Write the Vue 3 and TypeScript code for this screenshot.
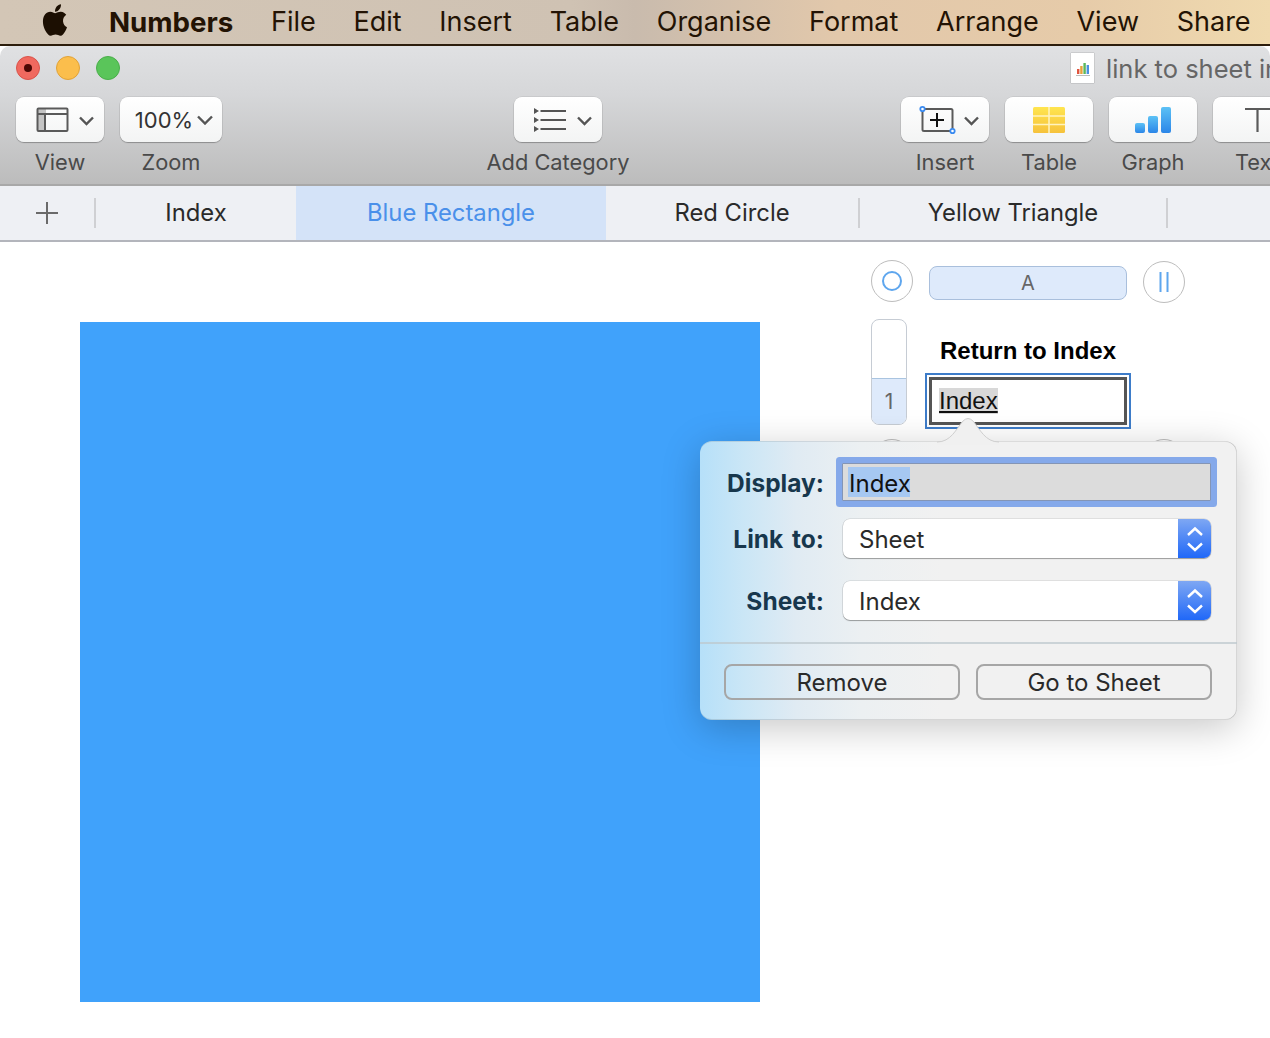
<script setup lang="ts">
const menus: string[] = ['File', 'Edit', 'Insert', 'Table', 'Organise', 'Format', 'Arrange', 'View', 'Share']
</script>

<template>
  <div class="screen">
    <header class="menubar">
      <svg class="apple" width="38" height="42" viewBox="0 0 24 24" preserveAspectRatio="none">
        <path fill="#1c0f02" d="M17.05 20.28c-.98.95-2.05.8-3.08.35-1.09-.46-2.09-.48-3.24 0-1.44.62-2.2.44-3.06-.35C2.79 15.25 3.51 7.59 9.05 7.31c1.35.07 2.29.74 3.08.8 1.18-.24 2.31-.93 3.57-.84 1.51.12 2.65.72 3.4 1.8-3.12 1.87-2.38 5.98.48 7.13-.57 1.5-1.31 2.99-2.54 4.09zM12.03 7.25c-.15-2.23 1.66-4.07 3.74-4.25.29 2.58-2.34 4.5-3.74 4.25z" />
      </svg>
      <span class="app-name">Numbers</span>
      <span v-for="m in menus" :key="m" class="menu-item">{{ m }}</span>
    </header>

    <div class="window">
      <section class="chrome">
        <div class="titlebar">
          <span class="light red"><i></i></span>
          <span class="light yellow"></span>
          <span class="light green"></span>
          <span class="doc">
            <svg width="16" height="16" viewBox="0 0 16 16">
              <rect x="2" y="9" width="2.4" height="5" fill="#e0563f" />
              <rect x="5.2" y="6" width="2.4" height="8" fill="#e8a13a" />
              <rect x="8.4" y="3" width="2.4" height="11" fill="#5cb85c" />
              <rect x="11.6" y="5" width="2.4" height="9" fill="#4a90e2" />
              <rect x="1" y="15" width="14" height="1" fill="#bbb" />
            </svg>
          </span>
          <span class="doc-title">link to sheet in Numbers</span>
        </div>

        <div class="toolbar">
          <div class="tool w88">
            <div class="tbtn">
              <svg width="88" height="45" viewBox="0 0 88 45">
                <rect x="22" y="12" width="8" height="22" fill="#c4c4c4" />
                <rect x="21.500" y="11.500" width="30" height="22.500" rx="1" fill="none" stroke="#5a5a5a" stroke-width="2" />
                <path d="M21.500 17H51.500M29 17V34" fill="none" stroke="#5a5a5a" stroke-width="2" />
                <path d="M64 20.500l6.500 6.500 6.500-6.500" fill="none" stroke="#555" stroke-width="2.400" />
              </svg>
            </div>
            <span class="tlabel">View</span>
          </div>
          <div class="tool w102">
            <div class="tbtn zoombtn">
              <span class="zoomval">100%</span>
              <svg width="16" height="10" viewBox="0 0 16 10">
                <path d="M1 1.500l7 7 7-7" fill="none" stroke="#555" stroke-width="2.400" />
              </svg>
            </div>
            <span class="tlabel">Zoom</span>
          </div>
          <div class="tool w88 add-cat">
            <div class="tbtn">
              <svg width="88" height="45" viewBox="0 0 88 45">
                <path d="M20 11l5 3-5 3zM20 20l5 3-5 3zM20 29l5 3-5 3z" fill="#555" />
                <path d="M26.500 14H52M26.500 23H52M26.500 32H52" stroke="#555" stroke-width="2" />
                <path d="M64 20.500l6.500 6.500 6.500-6.500" fill="none" stroke="#555" stroke-width="2.400" />
              </svg>
            </div>
            <span class="tlabel">Add Category</span>
          </div>
          <div class="tool w88 insert">
            <div class="tbtn">
              <svg width="88" height="45" viewBox="0 0 88 45">
                <rect x="21.500" y="12" width="30" height="22" rx="1.500" fill="none" stroke="#5a5a5a" stroke-width="2" />
                <path d="M36 16V30M29 23H43" stroke="#111" stroke-width="2" />
                <circle cx="21.500" cy="12" r="2.200" fill="#fff" stroke="#3b8bf0" stroke-width="1.800" />
                <circle cx="51.500" cy="34" r="2.200" fill="#fff" stroke="#3b8bf0" stroke-width="1.800" />
                <path d="M64 20.500l6.500 6.500 6.500-6.500" fill="none" stroke="#555" stroke-width="2.400" />
              </svg>
            </div>
            <span class="tlabel">Insert</span>
          </div>
          <div class="tool w88">
            <div class="tbtn">
              <svg width="32" height="26" viewBox="0 0 32 26">
                <defs>
                  <linearGradient id="tblg" x1="0" y1="0" x2="0" y2="1">
                    <stop offset="0" stop-color="#ffe54f" />
                    <stop offset="1" stop-color="#f6c23c" />
                  </linearGradient>
                </defs>
                <rect width="32" height="26" rx="1.500" fill="url(#tblg)" />
                <path d="M0 9H32M0 17.500H32M16 0V26" stroke="#fff3c0" stroke-width="1.500" />
              </svg>
            </div>
            <span class="tlabel">Table</span>
          </div>
          <div class="tool w88">
            <div class="tbtn">
              <svg width="36" height="26" viewBox="0 0 36 26">
                <defs>
                  <linearGradient id="grlg" x1="0" y1="0" x2="0" y2="1">
                    <stop offset="0" stop-color="#5cc1f5" />
                    <stop offset="1" stop-color="#2b86e8" />
                  </linearGradient>
                </defs>
                <rect x="0" y="16" width="10" height="10" rx="2" fill="url(#grlg)" />
                <rect x="13" y="9" width="10" height="17" rx="2" fill="url(#grlg)" />
                <rect x="26" y="0" width="10" height="26" rx="2" fill="url(#grlg)" />
              </svg>
            </div>
            <span class="tlabel">Graph</span>
          </div>
          <div class="tool w88">
            <div class="tbtn">
              <svg width="88" height="45" viewBox="0 0 88 45">
                <path d="M32 12H58M44.500 12V35" fill="none" stroke="#5a5a5a" stroke-width="2.200" />
              </svg>
            </div>
            <span class="tlabel">Text</span>
          </div>
        </div>
      </section>

      <nav class="tabs">
        <div class="tab-add">
          <svg width="24" height="24" viewBox="0 0 24 24">
            <path d="M12 1V23M1 12H23" stroke="#6a6a6a" stroke-width="2" />
          </svg>
        </div>
        <span class="sep"></span>
        <div class="tab w-index">Index</div>
        <div class="tab w-blue active">Blue Rectangle</div>
        <div class="tab w-red">Red Circle</div>
        <span class="sep"></span>
        <div class="tab w-yellow">Yellow Triangle</div>
        <span class="sep"></span>
      </nav>

      <main class="canvas">
        <div class="blue-rect"></div>

        <div class="sheet-table">
          <div class="col-row">
            <span class="round-btn top">
              <svg width="22" height="22" viewBox="0 0 22 22">
                <circle cx="11" cy="11" r="9" fill="none" stroke="#5ea6ee" stroke-width="2" />
              </svg>
            </span>
            <span class="col-head">A</span>
            <span class="round-btn end">
              <svg width="22" height="22" viewBox="0 0 22 22">
                <path d="M7.500 1V21M14.500 1V21" stroke="#5ea6ee" stroke-width="2" />
              </svg>
            </span>
          </div>
          <div class="body-row">
            <div class="row-head">
              <div class="row-head-top"></div>
              <div class="row-head-num">1</div>
            </div>
            <div class="cells">
              <div class="cell-title">Return to Index</div>
              <div class="cell-link"><span class="cell-text">Index</span></div>
            </div>
          </div>
          <div class="bottom-row">
            <span class="round-btn"></span>
            <span class="round-btn"></span>
          </div>
        </div>

        <div class="popover">
          <svg class="arrow" width="70" height="30" viewBox="0 0 70 30">
            <path d="M3 27C17 27 22 14 29 6Q34 1 39 6C46 14 51 27 65 27V30H3Z" fill="#f0f0f0" />
            <path d="M3 27C17 27 22 14 29 6Q34 1 39 6C46 14 51 27 65 27" fill="none" stroke="#cfcfcf" stroke-width="1" />
          </svg>
          <div class="form-row first">
            <span class="flabel low">Display:</span>
            <div class="text-field"><span class="sel-text">Index</span></div>
          </div>
          <div class="form-row second">
            <span class="flabel wide">Link to:</span>
            <div class="select">
              <span class="select-val">Sheet</span>
              <span class="stepper">
                <svg width="18" height="28" viewBox="0 0 18 28">
                  <path d="M2 10l7-6.500 7 6.500M2 18.500l7 6.500 7-6.500" fill="none" stroke="#fff" stroke-width="2.400" />
                </svg>
              </span>
            </div>
          </div>
          <div class="form-row third">
            <span class="flabel">Sheet:</span>
            <div class="select">
              <span class="select-val">Index</span>
              <span class="stepper">
                <svg width="18" height="28" viewBox="0 0 18 28">
                  <path d="M2 10l7-6.500 7 6.500M2 18.500l7 6.500 7-6.500" fill="none" stroke="#fff" stroke-width="2.400" />
                </svg>
              </span>
            </div>
          </div>
          <div class="divider"></div>
          <div class="actions">
            <button class="act">Remove</button>
            <button class="act">Go to Sheet</button>
          </div>
        </div>
      </main>
    </div>
  </div>
</template>

<style>
html, body { margin: 0; background: #fff; }
</style>

<style scoped>
.screen {
  width: 1270px;
  height: 1038px;
  overflow: hidden;
  background: #fff;
  font-family: Inter, "Noto Sans", sans-serif;
  display: flex;
  flex-direction: column;
}
.menubar {
  height: 43px;
  flex: none;
  display: flex;
  align-items: center;
  gap: 37.7px;
  padding: 0 0 1px 36px;
  border-bottom: 2px solid #2c1d0c;
  background: linear-gradient(90deg, #d3c6b6 0%, #cfc2b3 45%, #c9bbad 50%, #e2c8ab 66%, #e6cba9 85%, #f0daaf 100%);
  color: #231304;
  font-size: 27px;
}
.apple { margin: 0 -2.7px 3px 0; flex: none; }
.app-name { font-weight: 700; font-size: 27.7px; }
.menu-item { white-space: nowrap; }
.window {
  flex: 1;
  display: flex;
  flex-direction: column;
  background: #fff;
  min-height: 0;
}
.chrome {
  height: 140px;
  flex: none;
  box-sizing: border-box;
  border-radius: 10px 10px 0 0;
  border-bottom: 2px solid #a8a8a8;
  background: linear-gradient(180deg, #e0e1e3 0%, #d6d7d9 35%, #bcbcbc 100%);
  overflow: hidden;
}
.titlebar {
  height: 44px;
  display: flex;
  align-items: center;
  padding-left: 16px;
  gap: 16px;
  white-space: nowrap;
}
.light {
  width: 24px;
  height: 24px;
  border-radius: 50%;
  flex: none;
  box-sizing: border-box;
  display: flex;
  align-items: center;
  justify-content: center;
}
.red { background: #f0695f; border: 1px solid #d9534a; }
.red i { width: 8px; height: 8px; border-radius: 50%; background: #4c0805; }
.yellow { background: #fbbe4c; border: 1px solid #e0a238; }
.green { background: #5ac55a; border: 1px solid #4aae4a; }
.doc {
  width: 23px;
  height: 30px;
  margin-left: 935px;
  flex: none;
  background: #fff;
  box-shadow: 0 0 1px rgba(0, 0, 0, 0.5);
  display: flex;
  align-items: center;
  justify-content: center;
}
.doc-title {
  margin-left: -4px;
  font-size: 25.5px;
  color: #666;
}
.toolbar {
  display: flex;
  padding: 7px 0 0 16px;
  gap: 16px;
}
.tool {
  flex: none;
  display: flex;
  flex-direction: column;
  align-items: center;
  gap: 7px;
}
.w88 { width: 88px; }
.w102 { width: 102px; }
.add-cat { margin-left: 276px; }
.insert { margin-left: 283px; }
.tbtn {
  width: 100%;
  height: 45px;
  box-sizing: border-box;
  background: linear-gradient(180deg, #ffffff, #f3f4f4);
  border-radius: 8px;
  box-shadow: 0 0 0 0.5px rgba(0, 0, 0, 0.12), 0 1px 1px rgba(0, 0, 0, 0.25);
  display: flex;
  align-items: center;
  justify-content: center;
  gap: 4px;
}
.zoombtn { padding-left: 6px; }
.zoomval { font-size: 22px; color: #333; }
.tlabel {
  font-size: 21.8px;
  line-height: 26px;
  color: #4a4a4a;
  white-space: nowrap;
}
.tabs {
  height: 56px;
  flex: none;
  box-sizing: border-box;
  border-bottom: 2px solid #b3b5bc;
  background: #eef0f4;
  display: flex;
  align-items: stretch;
}
.tab-add {
  width: 94px;
  display: flex;
  align-items: center;
  justify-content: center;
}
.sep {
  width: 2px;
  height: 30px;
  align-self: center;
  background: #cfd0d3;
  flex: none;
}
.tab {
  display: flex;
  align-items: center;
  justify-content: center;
  padding-bottom: 2px;
  box-sizing: border-box;
  font-size: 23.8px;
  color: #2a2a2a;
  flex: none;
}
.w-index { width: 200px; }
.w-blue { width: 310px; }
.w-red { width: 252px; }
.w-yellow { width: 306px; }
.active { background: #d4e3f8; color: #4a90ea; }
.canvas {
  position: relative;
  flex: 1;
  padding: 80px 0 0 80px;
  background: #fff;
}
.blue-rect {
  width: 680px;
  height: 680px;
  background: #40a2fb;
}
.sheet-table {
  position: absolute;
  left: 871px;
  top: 18px;
  width: 314px;
  font-family: "Liberation Sans", Arial, sans-serif;
}
.col-row {
  display: flex;
  height: 43px;
  gap: 16px;
}
.round-btn {
  width: 42px;
  height: 42px;
  box-sizing: border-box;
  flex: none;
  border-radius: 50%;
  background: #fff;
  border: 1.5px solid #bdbdbd;
  display: flex;
  align-items: center;
  justify-content: center;
}
.top { align-self: flex-start; }
.end { align-self: flex-end; }
.col-head {
  width: 198px;
  height: 34px;
  margin-top: 6px;
  box-sizing: border-box;
  border: 1.5px solid #a9bfdc;
  border-radius: 8px;
  background: #deeafb;
  color: #666;
  font-family: Inter, sans-serif;
  font-size: 20px;
  display: flex;
  align-items: center;
  justify-content: center;
}
.body-row {
  display: flex;
  gap: 22px;
  margin-top: 16px;
}
.row-head {
  width: 36px;
  height: 106px;
  box-sizing: border-box;
  border: 1.5px solid #c6ccd4;
  border-radius: 8px;
  overflow: hidden;
  display: flex;
  flex-direction: column;
  background: #fff;
}
.row-head-top { height: 58px; flex: none; }
.row-head-num {
  flex: 1;
  border-top: 1.5px solid #a9c4e0;
  background: #deeafb;
  color: #666;
  font-family: Inter, sans-serif;
  font-size: 21px;
  display: flex;
  align-items: center;
  justify-content: center;
}
.cells { width: 198px; }
.cell-title {
  height: 58px;
  padding-top: 6px;
  box-sizing: border-box;
  display: flex;
  align-items: center;
  justify-content: center;
  font-weight: 700;
  font-size: 24px;
  color: #000;
}
.cell-link {
  height: 48px;
  box-sizing: border-box;
  border: 3px solid #555;
  outline: 2px solid #3d7cc9;
  outline-offset: 2px;
  display: flex;
  align-items: center;
  padding-left: 7px;
  background: #fff;
}
.cell-text {
  font-size: 24px;
  line-height: 26px;
  color: #111;
  background: #d8d8d8;
  text-decoration: underline;
}
.bottom-row {
  display: flex;
  justify-content: space-between;
  margin-top: 14px;
}
.popover {
  position: absolute;
  left: 700px;
  top: 199px;
  width: 537px;
  height: 279px;
  box-sizing: border-box;
  border-radius: 12px;
  background: linear-gradient(90deg, #b6e0f9 0%, #cae6f6 8%, #e0ebf3 18%, #ecf0f2 30%, #f1f1f1 45%);
  box-shadow: inset -1px 0 0 rgba(0, 0, 0, 0.11), inset 0 1px 0 rgba(0, 0, 0, 0.09), inset 0 -1px 0 rgba(0, 0, 0, 0.11), 0 8px 38px rgba(0, 0, 0, 0.22);
  padding-top: 22px;
}
.arrow {
  position: absolute;
  left: 234px;
  top: -26px;
}
.form-row {
  display: grid;
  grid-template-columns: 124px 368px;
  column-gap: 19px;
  align-items: center;
}
.second { margin-top: 18px; }
.third { margin-top: 23px; }
.flabel {
  text-align: right;
  font-weight: 700;
  font-size: 24.5px;
  color: #17374d;
  white-space: nowrap;
}
.low { padding-top: 2px; }
.wide { word-spacing: 3px; }
.text-field {
  height: 38px;
  box-sizing: border-box;
  margin-left: -1px;
  width: 369px;
  background: #dcdcdc;
  border: 1px solid #8495b5;
  box-shadow: 0 0 0 6px #85a9ea;
  border-radius: 1px;
  display: flex;
  align-items: center;
  padding-left: 5px;
}
.sel-text {
  background: #a6c8f2;
  font-size: 24px;
  height: 30px;
  line-height: 34px;
  color: #111;
  padding: 0 1px;
  width: 62px;
  box-sizing: border-box;
}
.select {
  height: 39px;
  box-sizing: border-box;
  background: #fff;
  border-radius: 7px;
  box-shadow: 0 0 0 0.5px rgba(0, 0, 0, 0.15), 0 1px 1px rgba(0, 0, 0, 0.3);
  display: flex;
  align-items: center;
  justify-content: space-between;
  padding-left: 16px;
  overflow: hidden;
}
.select-val {
  font-size: 24px;
  padding-top: 2px;
  color: #2a2a2a;
}
.stepper {
  width: 33px;
  height: 100%;
  background: linear-gradient(180deg, #7ea7f3, #2068f8);
  display: flex;
  align-items: center;
  justify-content: center;
}
.divider {
  margin-top: 22px;
  height: 1.5px;
  background: rgba(190, 200, 205, 0.75);
}
.actions {
  display: flex;
  gap: 16px;
  padding: 20.5px 25px 0 24px;
}
.act {
  flex: 1;
  height: 36px;
  box-sizing: border-box;
  border: 2px solid #a6a6a6;
  border-radius: 8px;
  background: transparent;
  font-family: inherit;
  font-size: 24px;
  color: #2a2a2a;
  padding: 0;
  display: flex;
  align-items: center;
  justify-content: center;
}
</style>
